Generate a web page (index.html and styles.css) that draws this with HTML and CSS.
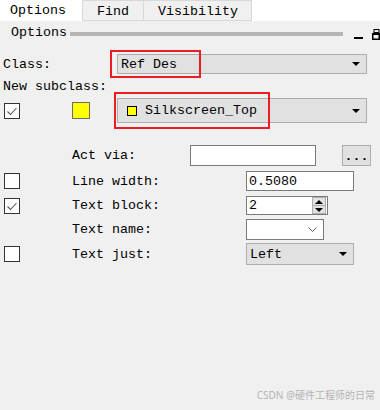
FILE: index.html
```html
<!DOCTYPE html>
<html lang="en">
<head>
    <meta charset="UTF-8">
    <title>Options</title>
    <link rel="stylesheet" href="styles.css">
</head>
<body>
    <div class="tabs">
        <div class="tab tab-active">Options</div>
        <div class="tab tab-find">Find</div>
        <div class="tab tab-vis">Visibility</div>
    </div>

    <div class="panel">
        <div class="panel-head">
            <span class="panel-title">Options</span>
            <span class="grip"></span>
            <span class="head-min"></span>
            <svg class="head-float" width="8" height="11" viewBox="0 0 8 11">
                <rect x="2" y="0.5" width="5" height="3" fill="none" stroke="#000"/>
                <rect x="0" y="4" width="8" height="7" fill="#000"/>
                <rect x="1.5" y="6" width="5" height="3.5" fill="#f0f0f0"/>
            </svg>
        </div>

        <div class="form">
            <!-- Class -->
            <div class="row row-class">
                <span class="lbl lbl-class">Class:</span>
                <div class="combo combo-class">
                    <span class="combo-text">Ref Des</span>
                    <span class="arrow"></span>
                    <span class="mark mark-class"></span>
                </div>
            </div>

            <div class="row row-newsub">
                <span class="lbl">New subclass:</span>
            </div>

            <!-- Subclass -->
            <div class="row row-sub">
                <div class="cell-check">
                    <span class="check is-checked"><svg width="14" height="14" viewBox="0 0 14 14"><path d="M2.5 7.5 L5.5 10.5 L11.5 4" fill="none" stroke="#555" stroke-width="1.1"/></svg></span>
                </div>
                <span class="swatch"></span>
                <div class="combo combo-sub">
                    <span class="mini-swatch"></span>
                    <span class="combo-text">Silkscreen_Top</span>
                    <span class="arrow"></span>
                    <span class="mark mark-sub"></span>
                </div>
            </div>

            <!-- Act via -->
            <div class="row row-actvia">
                <div class="cell-check"></div>
                <span class="lbl lbl-actvia">Act via:</span>
                <span class="field field-actvia"></span>
                <span class="btn-dots">...</span>
            </div>

            <div class="row row-linew">
                <div class="cell-check"><span class="check"></span></div>
                <span class="lbl lbl-wide">Line width:</span>
                <span class="field field-linew">0.5080</span>
            </div>

            <div class="row row-tblock">
                <div class="cell-check">
                    <span class="check is-checked"><svg width="14" height="14" viewBox="0 0 14 14"><path d="M2.5 7.5 L5.5 10.5 L11.5 4" fill="none" stroke="#555" stroke-width="1.1"/></svg></span>
                </div>
                <span class="lbl lbl-wide">Text block:</span>
                <div class="field spin">
                    <span class="spin-text">2</span>
                    <span class="spin-btns">
                        <span class="spin-up"></span>
                        <span class="spin-down"></span>
                    </span>
                </div>
            </div>

            <div class="row row-tname">
                <div class="cell-check"></div>
                <span class="lbl lbl-wide">Text name:</span>
                <div class="field combo-edit">
                    <svg class="chev" width="9" height="5" viewBox="0 0 9 5"><path d="M0.5 0.5 L4.5 4.5 L8.5 0.5" fill="none" stroke="#606060" stroke-width="1"/></svg>
                </div>
            </div>

            <div class="row row-tjust">
                <div class="cell-check"><span class="check"></span></div>
                <span class="lbl lbl-wide">Text just:</span>
                <div class="combo combo-just">
                    <span class="combo-text">Left</span>
                    <span class="arrow"></span>
                </div>
            </div>
        </div>

        <div class="watermark">CSDN @硬件工程师的日常</div>
    </div>
</body>
</html>
```

FILE: styles.css
```css
* {
    margin: 0;
    padding: 0;
    box-sizing: border-box;
}

body {
    font-family: 'Liberation Mono', 'DejaVu Sans Mono', 'Noto Sans CJK SC', monospace;
    font-size: 13.33px;
    color: #000;
    background: #fff;
    width: 380px;
    height: 410px;
    overflow: hidden;
}

/* tab strip */
.tabs {
    display: flex;
    height: 21px;
    background: #fff;
}

.tab {
    height: 21px;
    line-height: 21px;
    background: #f0f0f0;
    border-top: 1px solid #d9d9d9;
    border-right: 1px solid #d9d9d9;
    border-bottom: 1px solid #d9d9d9;
}

.tab-active {
    width: 83px;
    padding-left: 10px;
    background: #fff;
    border-top: none;
    border-bottom: none;
}

.tab-find {
    width: 61px;
    padding-left: 14px;
}

.tab-vis {
    width: 108px;
    padding-left: 14px;
}

/* panel */
.panel {
    position: relative;
    background: #f0f0f0;
    height: 389px;
}

.panel-head {
    display: flex;
    align-items: center;
    height: 24px;
    padding-left: 11px;
}

.panel-title {
    line-height: 24px;
}

.grip {
    width: 274px;
    height: 4px;
    margin-left: 3px;
    margin-top: 1px;
    background: #b5b5b5;
}

.head-min {
    width: 9px;
    height: 2px;
    background: #000;
    margin-left: 11px;
    margin-top: 10px;
}

.head-float {
    margin-left: 9px;
    margin-top: 2px;
}

/* form rows */
.form {
    padding-top: 9px;
}

.row {
    display: flex;
    align-items: center;
}

.row-class { height: 20px; }
.row-newsub { height: 16px; margin-top: 4px; }
.row-sub { height: 25px; margin-top: 4px; }
.row-actvia { height: 21px; margin-top: 22px; }
.row-linew { height: 20px; margin-top: 5px; }
.row-tblock { height: 19px; margin-top: 5px; }
.row-tname { height: 21px; margin-top: 4px; }
.row-tjust { height: 22px; margin-top: 3px; }

.lbl {
    padding-left: 3px;
    white-space: pre;
}

.lbl-class {
    width: 117px;
}

.lbl-actvia {
    width: 118px;
    padding-left: 0;
}

.lbl-wide {
    width: 174px;
    padding-left: 0;
}

.cell-check {
    width: 72px;
    display: flex;
    align-items: center;
    padding-left: 4px;
}

.check {
    width: 16px;
    height: 16px;
    background: #fff;
    border: 1px solid #333;
    display: flex;
    align-items: center;
    justify-content: center;
}

.swatch {
    width: 18px;
    height: 17px;
    background: #ffff00;
    border: 1px solid #6d6d6d;
    margin-right: 27px;
}

/* combo boxes */
.combo {
    position: relative;
    display: flex;
    align-items: center;
    height: 100%;
    background: #e1e1e1;
    border: 1px solid #adadad;
}

.combo-class,
.combo-sub {
    width: 250px;
}

.combo-class .combo-text {
    padding-left: 3px;
}

.combo-sub .combo-text {
    padding-left: 8px;
}

.mini-swatch {
    width: 10px;
    height: 10px;
    margin-left: 9px;
    background: #ffff00;
    border: 1px solid #000;
}

.arrow {
    margin-left: auto;
    margin-right: 6px;
    width: 0;
    height: 0;
    border-left: 4px solid transparent;
    border-right: 4px solid transparent;
    border-top: 4px solid #000;
}

.combo-just {
    width: 108px;
}

.combo-just .combo-text {
    padding-left: 3px;
}

/* red annotation boxes */
.mark {
    position: absolute;
    border: 2px solid #ed1c24;
}

.mark-class {
    left: -8px;
    top: -5px;
    width: 91px;
    height: 28px;
}

.mark-sub {
    left: -4px;
    top: -7px;
    width: 156px;
    height: 37px;
}

/* edit fields */
.field {
    height: 100%;
    background: #fff;
    border: 1px solid #7a7a7a;
    display: flex;
    align-items: center;
    padding-left: 2px;
}

.field-actvia {
    width: 126px;
}

.btn-dots {
    width: 29px;
    height: 100%;
    margin-left: 26px;
    background: #e1e1e1;
    border: 1px solid #adadad;
    text-align: center;
    line-height: 22px;
    font-weight: bold;
}

.field-linew {
    width: 108px;
}

.spin {
    width: 82px;
    padding-right: 1px;
}

.spin-btns {
    margin-left: auto;
    width: 14px;
    height: 17px;
    display: flex;
    flex-direction: column;
    background: #e1e1e1;
    border: 1px solid #adadad;
}

.spin-up,
.spin-down {
    flex: 1;
    display: flex;
    align-items: center;
    justify-content: center;
}

.spin-up::after {
    content: "";
    border-left: 4px solid transparent;
    border-right: 4px solid transparent;
    border-bottom: 4px solid #000;
}

.spin-down::after {
    content: "";
    border-left: 4px solid transparent;
    border-right: 4px solid transparent;
    border-top: 4px solid #000;
}

.spin-down {
    border-top: 1px solid #adadad;
}

.combo-edit {
    width: 78px;
}

.chev {
    margin-left: auto;
    margin-right: 6px;
}

/* watermark */
.watermark {
    position: absolute;
    right: 5px;
    bottom: 8px;
    font-family: 'Noto Sans', 'Noto Sans CJK SC', sans-serif;
    font-size: 10px;
    line-height: 14px;
    color: #b4b4b4;
    white-space: nowrap;
}
```
